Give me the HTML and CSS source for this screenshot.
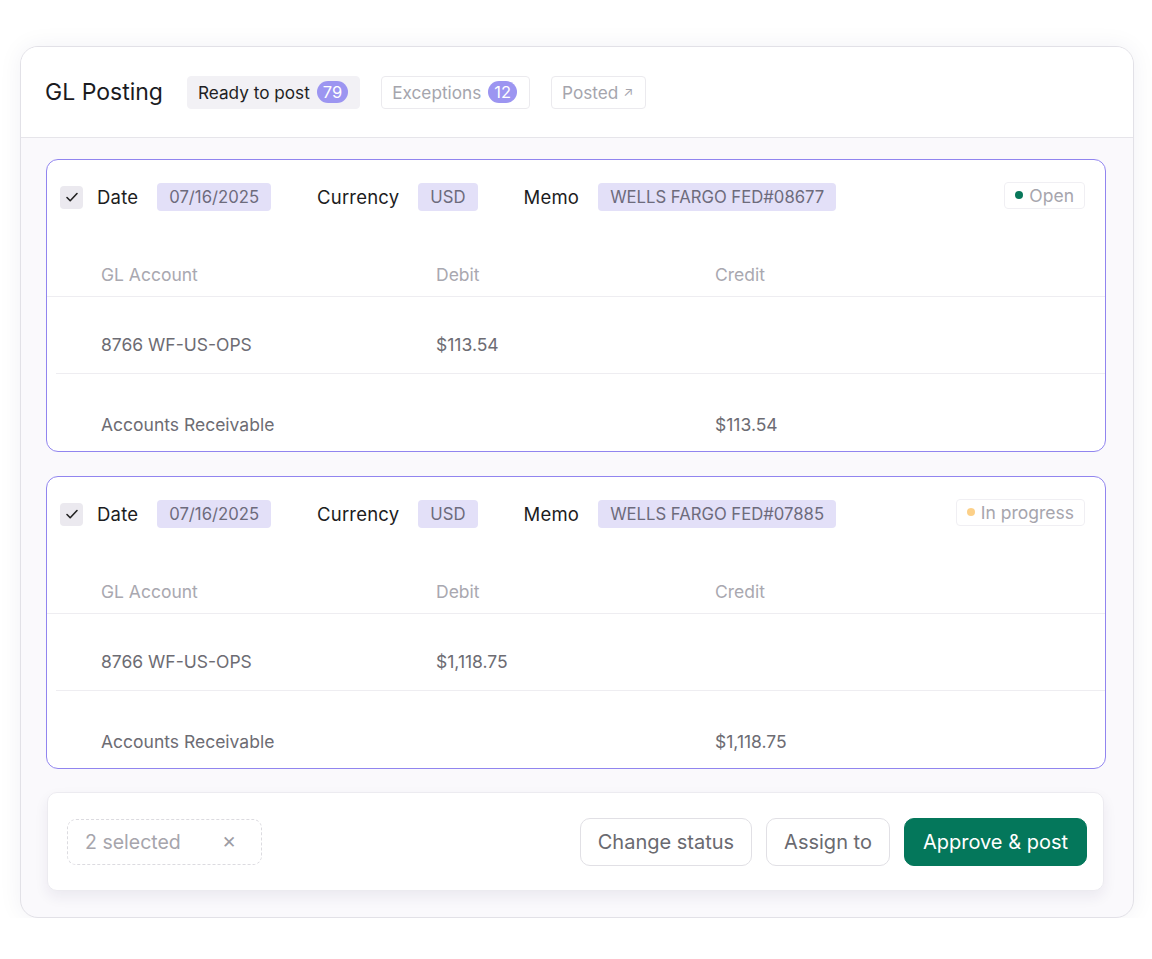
FILE: index.html
```html
<!DOCTYPE html>
<html>
	<head>
		<meta charset="utf-8"/>
		<title>GL Posting</title>
		<link rel="stylesheet" href="styles.css">
	</head>
	<body>
		<div id="panel">
			<header class="panelHead">
				<h1>GL Posting</h1>
				<div class="tab tabActive">Ready to post <span class="count">79</span></div>
				<div class="tab">Exceptions <span class="count">12</span></div>
				<div class="tab">Posted <span class="arrow">&#8599;</span></div>
			</header>
			<div class="panelBody">
				<div class="entry">
					<div class="entryHead">
						<span class="check"><svg width="16" height="16" viewBox="0 0 16 16"><path d="M3 8.5l3.2 3.2L13 4.5" fill="none" stroke="#222" stroke-width="1.6" stroke-linecap="round" stroke-linejoin="round"/></svg></span>
						<div class="field"><span class="label">Date</span><span class="chip">07/16/2025</span></div>
						<div class="field"><span class="label">Currency</span><span class="chip">USD</span></div>
						<div class="field"><span class="label">Memo</span><span class="chip">WELLS FARGO FED#08677</span></div>
						<div class="status"><span class="dot dotOpen"></span>Open</div>
					</div>
					<div class="row rowHead"><span>GL Account</span><span>Debit</span><span>Credit</span></div>
					<div class="row rowFirst"><span>8766 WF-US-OPS</span><span>$113.54</span><span></span></div>
					<div class="row rowLast"><span>Accounts Receivable</span><span></span><span>$113.54</span></div>
				</div>
				<div class="entry">
					<div class="entryHead">
						<span class="check"><svg width="16" height="16" viewBox="0 0 16 16"><path d="M3 8.5l3.2 3.2L13 4.5" fill="none" stroke="#222" stroke-width="1.6" stroke-linecap="round" stroke-linejoin="round"/></svg></span>
						<div class="field"><span class="label">Date</span><span class="chip">07/16/2025</span></div>
						<div class="field"><span class="label">Currency</span><span class="chip">USD</span></div>
						<div class="field"><span class="label">Memo</span><span class="chip">WELLS FARGO FED#07885</span></div>
						<div class="status"><span class="dot dotProgress"></span>In progress</div>
					</div>
					<div class="row rowHead"><span>GL Account</span><span>Debit</span><span>Credit</span></div>
					<div class="row rowFirst"><span>8766 WF-US-OPS</span><span>$1,118.75</span><span></span></div>
					<div class="row rowLast"><span>Accounts Receivable</span><span></span><span>$1,118.75</span></div>
				</div>
				<div class="actionBar">
					<div class="selected">2 selected <span class="clear">&#10005;</span></div>
					<div class="actions">
						<button class="btn">Change status</button>
						<button class="btn">Assign to</button>
						<button class="btn btnPrimary">Approve &amp; post</button>
					</div>
				</div>
			</div>
		</div>
	</body>
</html>
```
FILE: styles.css
```css
/*page*/
body{
	margin:0;
	padding:46px 18px 0 20px;
	background:#ffffff;
	font-family:Inter, "Liberation Sans", sans-serif;
}
#panel{
	width:1112px;
	border:1px solid #e2e1e7;
	border-radius:18px;
	background:#faf9fc;
	box-shadow:0 0 24px rgba(40,30,90,0.06);
	overflow:hidden;
}

/*header with tabs*/
.panelHead{
	display:flex;
	align-items:center;
	height:90px;
	padding:0 0 0 24px;
	background:#ffffff;
	border-bottom:1px solid #e6e5ea;
}
.panelHead h1{
	margin:0 24px 0 0;
	font-size:23px;
	font-weight:400;
	color:#1b1b1f;
}
.tab{
	display:flex;
	align-items:center;
	height:31px;
	padding:0 12px 0 10px;
	margin-right:21px;
	border:1px solid #ebeaee;
	border-radius:4px;
	font-size:17.2px;
	color:#a5a5ad;
}
.tabActive{
	background:#f2f1f5;
	border-color:#f2f1f5;
	color:#1f1f24;
	padding-right:11px;
}
.count{
	margin-left:7px;
	padding:0 6px;
	height:22px;
	line-height:22px;
	border-radius:11px;
	background:#9c95f1;
	color:#ffffff;
	font-size:16.5px;
}
.arrow{
	margin-left:5px;
	font-size:13px;
}

/*body and entries*/
.panelBody{
	padding:21px 27px 26px 25px;
}
.entry{
	background:#ffffff;
	border:1.5px solid #9185ef;
	border-radius:12px;
	margin-bottom:24px;
	overflow:hidden;
}
.entryHead{
	display:flex;
	align-items:center;
	padding:23px 20px 0 13px;
	height:28px;
}
.check{
	display:flex;
	align-items:center;
	justify-content:center;
	width:23px;
	height:23px;
	border-radius:4px;
	background:#ebe9ef;
	margin-right:14px;
}
.field{
	display:flex;
	align-items:center;
	margin-right:46px;
}
.label{
	font-size:18.5px;
	letter-spacing:0.2px;
	color:#1c1c21;
	margin-right:19px;
}
.chip{
	height:28px;
	line-height:28px;
	padding:0 12px;
	border-radius:4px;
	background:#e3e0f8;
	color:#6d6b7c;
	font-size:16.7px;
}
.status{
	display:flex;
	align-items:center;
	margin-left:auto;
	margin-top:-4px;
	height:25px;
	padding:0 10px 0 10px;
	border:1.5px solid #f0eff3;
	border-radius:4px;
	font-size:17.5px;
	color:#a6a5ad;
}
.dot{
	width:8px;
	height:8px;
	border-radius:50%;
	margin-right:6px;
}
.dotOpen{ background:#08775a;}
.dotProgress{ background:#fcd088;}

/*table rows*/
.row{
	display:grid;
	grid-template-columns:335px 279px 1fr;
	padding-left:54px;
	font-size:17.5px;
	color:#6d6c73;
}
.rowHead{
	margin-top:43px;
	height:42px;
	line-height:42px;
	color:#a9a8b0;
	border-bottom:1.5px solid #eeedf1;
}
.rowFirst{
	padding-top:37px;
	padding-bottom:17px;
	line-height:22px;
	border-bottom:1.5px solid #eeedf1;
	margin-left:9px;
	padding-left:45px;
}
.rowLast{
	padding-top:40px;
	padding-bottom:15px;
	line-height:22px;
}

/*bottom action bar*/
.actionBar{
	display:flex;
	align-items:center;
	height:97px;
	margin:-1px 2px 0 1px;
	padding:0 16px 0 19px;
	background:#ffffff;
	border:1px solid #ecebf0;
	border-radius:10px;
	box-shadow:0 6px 14px rgba(40,30,90,0.07);
}
.selected{
	display:flex;
	align-items:center;
	width:176px;
	height:44px;
	padding-left:17px;
	border:1.5px dashed #dcdbe0;
	border-radius:9px;
	font-size:19.5px;
	color:#a6a5ac;
}
.clear{
	margin-left:auto;
	margin-right:25px;
	font-size:17px;
	color:#9d9ca4;
}
.actions{
	display:flex;
	margin-left:auto;
}
.btn{
	height:48px;
	padding:0 17px;
	margin-left:14px;
	border:1.5px solid #e1e0e5;
	border-radius:10px;
	background:#ffffff;
	font-family:Inter, "Liberation Sans", sans-serif;
	font-size:20px;
	color:#6a6a70;
}
.btnPrimary{
	background:#04775b;
	border-color:#04775b;
	color:#ffffff;
	padding:0 18px;
}
```
